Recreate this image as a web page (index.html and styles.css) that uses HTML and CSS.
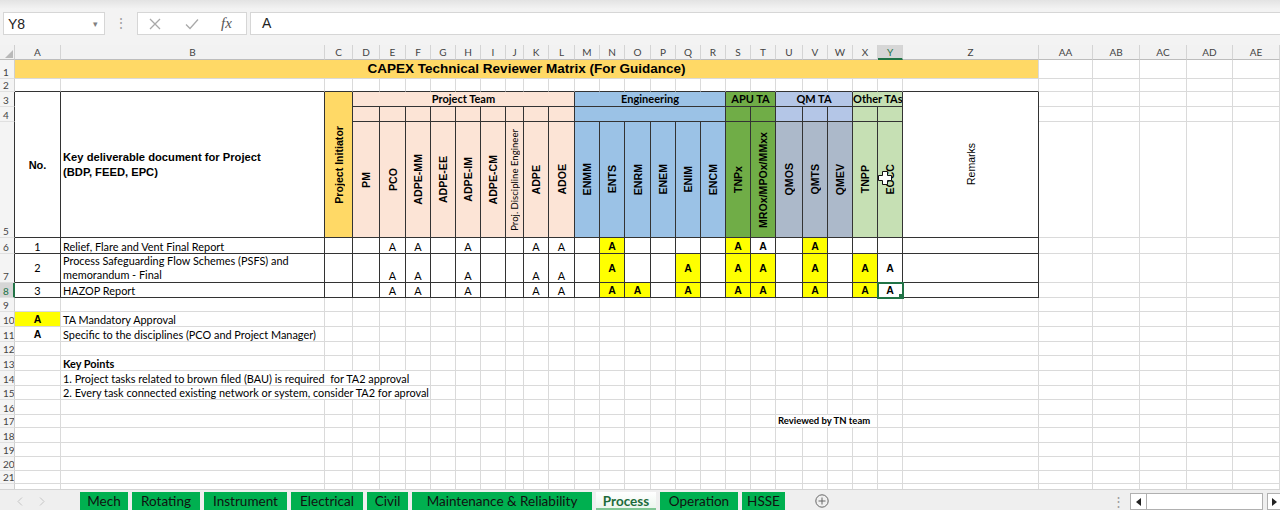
FILE: index.html
```html
<!DOCTYPE html>
<html>
<head>
<meta charset="utf-8">
<link rel="stylesheet" href="styles.css">
</head>
<body>
<div class="app">
  <div class="fbar">
    <div class="namebox"><span>Y8</span><span class="dd">&#9662;</span></div>
    <div class="dots">&#8942;</div>
    <div class="fxbox">
      <svg class="ic-x" width="12" height="12" viewBox="0 0 12 12"><path d="M1 1L11 11M11 1L1 11" stroke="#a9a9a9" stroke-width="1.3"/></svg>
      <svg class="ic-ok" width="14" height="12" viewBox="0 0 14 12"><path d="M1 6.5L5 10.5L13 1.5" stroke="#a9a9a9" stroke-width="1.3" fill="none"/></svg>
      <span class="fx">fx</span>
    </div>
    <div class="finput">A</div>
  </div>

  <div class="sheetwrap">
    <table class="sheet">
      <colgroup>
        <col class="w15"><col class="w46"><col class="w264"><col class="w28"><col class="w27"><col class="w26"><col class="w25"><col class="w25"><col class="w25"><col class="w25"><col class="w18"><col class="w25"><col class="w26"><col class="w25"><col class="w25"><col class="w26"><col class="w25"><col class="w25"><col class="w25"><col class="w25"><col class="w25"><col class="w27"><col class="w25"><col class="w25"><col class="w25"><col class="w25"><col class="w136"><col class="w54"><col class="w47"><col class="w47"><col class="w46"><col class="w47">
      </colgroup>
      <tr class="hdr">
        <th class="corner"><svg width="8" height="8" viewBox="0 0 8 8"><path d="M8 0V8H0Z" fill="#b9b9b9"/></svg></th>
        <th class="ch">A</th><th class="ch">B</th><th class="ch">C</th><th class="ch">D</th><th class="ch">E</th><th class="ch">F</th><th class="ch">G</th><th class="ch">H</th><th class="ch">I</th><th class="ch">J</th><th class="ch">K</th><th class="ch">L</th><th class="ch">M</th><th class="ch">N</th><th class="ch">O</th><th class="ch">P</th><th class="ch">Q</th><th class="ch">R</th><th class="ch">S</th><th class="ch">T</th><th class="ch">U</th><th class="ch">V</th><th class="ch">W</th><th class="ch">X</th><th class="ch chs">Y</th><th class="ch">Z</th><th class="ch">AA</th><th class="ch">AB</th><th class="ch">AC</th><th class="ch">AD</th><th class="ch">AE</th>
      </tr>
      <tr class="h19">
        <th class="rh">1</th>
        <td colspan="26" class="title">CAPEX Technical Reviewer Matrix (For Guidance)</td>
        <td></td><td></td><td></td><td></td><td></td>
      </tr>
      <tr class="h13 r2">
        <th class="rh">2</th>
        <td></td><td></td><td></td><td></td><td></td><td></td><td></td><td></td><td></td><td></td><td></td><td></td><td></td><td></td><td></td><td></td><td></td><td></td><td></td><td></td><td></td><td></td><td></td><td></td><td></td><td></td>
        <td class="x"></td><td class="x"></td><td class="x"></td><td class="x"></td><td class="x"></td>
      </tr>
      <tr class="h15 m">
        <th class="rh">3</th>
        <td rowspan="3" class="no">No.</td>
        <td rowspan="3" class="kd">Key deliverable document for Project<br>(BDP, FEED, EPC)</td>
        <td rowspan="3" class="gold vc"><span class="v">Project Initiator</span></td>
        <td colspan="9" class="peach gh">Project Team</td>
        <td colspan="6" class="blue gh">Engineering</td>
        <td colspan="2" class="green gh">APU TA</td>
        <td colspan="3" class="lav gh">QM TA</td>
        <td colspan="2" class="lgreen gh">Other TAs</td>
        <td rowspan="3" class="vc"><span class="v vr">Remarks</span></td>
        <td class="x"></td><td class="x"></td><td class="x"></td><td class="x"></td><td class="x"></td>
      </tr>
      <tr class="h15 m">
        <th class="rh">4</th>
        <td class="peach"></td><td class="peach"></td><td class="peach"></td><td class="peach"></td><td class="peach"></td><td class="peach"></td><td class="peach"></td><td class="peach"></td><td class="peach"></td>
        <td colspan="6" class="blue"></td>
        <td class="green"></td><td class="green"></td>
        <td class="lav"></td><td class="lav"></td><td class="lav"></td>
        <td class="lgreen"></td><td class="lgreen"></td>
        <td class="x"></td><td class="x"></td><td class="x"></td><td class="x"></td><td class="x"></td>
      </tr>
      <tr class="h116 m">
        <th class="rh">5</th>
        <td class="peach vc"><span class="v">PM</span></td>
        <td class="peach vc"><span class="v">PCO</span></td>
        <td class="peach vc"><span class="v">ADPE-MM</span></td>
        <td class="peach vc"><span class="v">ADPE-EE</span></td>
        <td class="peach vc"><span class="v">ADPE-IM</span></td>
        <td class="peach vc"><span class="v">ADPE-CM</span></td>
        <td class="peach vc"><span class="v vs">Proj. Discipline Engineer</span></td>
        <td class="peach vc"><span class="v">ADPE</span></td>
        <td class="peach vc"><span class="v">ADOE</span></td>
        <td class="blue vc"><span class="v">ENMM</span></td>
        <td class="blue vc"><span class="v">ENTS</span></td>
        <td class="blue vc"><span class="v">ENRM</span></td>
        <td class="blue vc"><span class="v">ENEM</span></td>
        <td class="blue vc"><span class="v">ENIM</span></td>
        <td class="blue vc"><span class="v">ENCM</span></td>
        <td class="green vc"><span class="v">TNPx</span></td>
        <td class="green vc"><span class="v">MROx/MPOx/MMxx</span></td>
        <td class="slate vc"><span class="v">QMOS</span></td>
        <td class="slate vc"><span class="v">QMTS</span></td>
        <td class="slate vc"><span class="v">QMEV</span></td>
        <td class="lgreen vc"><span class="v">TNPP</span></td>
        <td class="lgreen vc"><span class="v">EOCC</span></td>
        <td class="x"></td><td class="x"></td><td class="x"></td><td class="x"></td><td class="x"></td>
      </tr>
      <tr class="h16 m">
        <th class="rh">6</th>
        <td class="c">1</td>
        <td class="t">Relief, Flare and Vent Final Report</td>
        <td></td><td></td><td class="c">A</td><td class="c">A</td><td></td><td class="c">A</td><td></td><td></td><td class="c">A</td><td class="c">A</td>
        <td></td><td class="y">A</td><td></td><td></td><td></td><td></td>
        <td class="y">A</td><td class="ba">A</td>
        <td></td><td class="y">A</td><td></td>
        <td></td><td></td>
        <td></td>
        <td class="x"></td><td class="x"></td><td class="x"></td><td class="x"></td><td class="x"></td>
      </tr>
      <tr class="h29 m">
        <th class="rh">7</th>
        <td class="c mid">2</td>
        <td class="t two">Process Safeguarding Flow Schemes (PSFS) and<br>memorandum - Final</td>
        <td></td><td></td><td class="c">A</td><td class="c">A</td><td></td><td class="c">A</td><td></td><td></td><td class="c">A</td><td class="c">A</td>
        <td></td><td class="y">A</td><td></td><td></td><td class="y">A</td><td></td>
        <td class="y">A</td><td class="y">A</td>
        <td></td><td class="y">A</td><td></td>
        <td class="y">A</td><td class="ba">A</td>
        <td></td>
        <td class="x"></td><td class="x"></td><td class="x"></td><td class="x"></td><td class="x"></td>
      </tr>
      <tr class="h15 m">
        <th class="rh rhs">8</th>
        <td class="c">3</td>
        <td class="t">HAZOP Report</td>
        <td></td><td></td><td class="c">A</td><td class="c">A</td><td></td><td class="c">A</td><td></td><td></td><td class="c">A</td><td class="c">A</td>
        <td></td><td class="y">A</td><td class="y">A</td><td></td><td class="y">A</td><td></td>
        <td class="y">A</td><td class="y">A</td>
        <td></td><td class="y">A</td><td></td>
        <td class="y">A</td><td class="ba sel">A</td>
        <td></td>
        <td class="x"></td><td class="x"></td><td class="x"></td><td class="x"></td><td class="x"></td>
      </tr>
      <tr class="h14">
        <th class="rh">9</th>
        <td></td><td></td><td></td><td></td><td></td><td></td><td></td><td></td><td></td><td></td><td></td><td></td><td></td><td></td><td></td><td></td><td></td><td></td><td></td><td></td><td></td><td></td><td></td><td></td><td></td><td></td><td></td><td></td><td></td><td></td><td></td>
      </tr>
      <tr class="h15">
        <th class="rh">10</th>
        <td class="ya">A</td><td class="t">TA Mandatory Approval</td>
        <td></td><td></td><td></td><td></td><td></td><td></td><td></td><td></td><td></td><td></td><td></td><td></td><td></td><td></td><td></td><td></td><td></td><td></td><td></td><td></td><td></td><td></td><td></td><td></td><td></td><td></td><td></td><td></td><td></td>
      </tr>
      <tr class="h15">
        <th class="rh">11</th>
        <td class="ab">A</td><td class="t">Specific to the disciplines (PCO and Project Manager)</td>
        <td></td><td></td><td></td><td></td><td></td><td></td><td></td><td></td><td></td><td></td><td></td><td></td><td></td><td></td><td></td><td></td><td></td><td></td><td></td><td></td><td></td><td></td><td></td><td></td><td></td><td></td><td></td><td></td><td></td>
      </tr>
      <tr class="h14">
        <th class="rh">12</th>
        <td></td><td></td><td></td><td></td><td></td><td></td><td></td><td></td><td></td><td></td><td></td><td></td><td></td><td></td><td></td><td></td><td></td><td></td><td></td><td></td><td></td><td></td><td></td><td></td><td></td><td></td><td></td><td></td><td></td><td></td><td></td>
      </tr>
      <tr class="h15">
        <th class="rh">13</th>
        <td></td><td class="t b">Key Points</td>
        <td></td><td></td><td></td><td></td><td></td><td></td><td></td><td></td><td></td><td></td><td></td><td></td><td></td><td></td><td></td><td></td><td></td><td></td><td></td><td></td><td></td><td></td><td></td><td></td><td></td><td></td><td></td><td></td><td></td>
      </tr>
      <tr class="h15">
        <th class="rh">14</th>
        <td></td><td class="t ov" colspan="5">1. Project tasks related to brown filed (BAU) is required&nbsp; for TA2 approval</td>
        <td></td><td></td><td></td><td></td><td></td><td></td><td></td><td></td><td></td><td></td><td></td><td></td><td></td><td></td><td></td><td></td><td></td><td></td><td></td><td></td><td></td><td></td><td></td><td></td><td></td>
      </tr>
      <tr class="h14">
        <th class="rh">15</th>
        <td></td><td class="t ov" colspan="5">2. Every task connected existing network or system, consider TA2 for aproval</td>
        <td></td><td></td><td></td><td></td><td></td><td></td><td></td><td></td><td></td><td></td><td></td><td></td><td></td><td></td><td></td><td></td><td></td><td></td><td></td><td></td><td></td><td></td><td></td><td></td><td></td>
      </tr>
      <tr class="h15">
        <th class="rh">16</th>
        <td></td><td></td><td></td><td></td><td></td><td></td><td></td><td></td><td></td><td></td><td></td><td></td><td></td><td></td><td></td><td></td><td></td><td></td><td></td><td></td><td></td><td></td><td></td><td></td><td></td><td></td><td></td><td></td><td></td><td></td><td></td>
      </tr>
      <tr class="h13">
        <th class="rh">17</th>
        <td></td><td></td><td></td><td></td><td></td><td></td><td></td><td></td><td></td><td></td><td></td><td></td><td></td><td></td><td></td><td></td><td></td><td></td><td></td><td></td>
        <td colspan="4" class="t rv">Reviewed by TN team</td>
        <td></td><td></td><td></td><td></td><td></td><td></td><td></td>
      </tr>
      <tr class="h15">
        <th class="rh">18</th>
        <td></td><td></td><td></td><td></td><td></td><td></td><td></td><td></td><td></td><td></td><td></td><td></td><td></td><td></td><td></td><td></td><td></td><td></td><td></td><td></td><td></td><td></td><td></td><td></td><td></td><td></td><td></td><td></td><td></td><td></td><td></td>
      </tr>
      <tr class="h14">
        <th class="rh">19</th>
        <td></td><td></td><td></td><td></td><td></td><td></td><td></td><td></td><td></td><td></td><td></td><td></td><td></td><td></td><td></td><td></td><td></td><td></td><td></td><td></td><td></td><td></td><td></td><td></td><td></td><td></td><td></td><td></td><td></td><td></td><td></td>
      </tr>
      <tr class="h14">
        <th class="rh">20</th>
        <td></td><td></td><td></td><td></td><td></td><td></td><td></td><td></td><td></td><td></td><td></td><td></td><td></td><td></td><td></td><td></td><td></td><td></td><td></td><td></td><td></td><td></td><td></td><td></td><td></td><td></td><td></td><td></td><td></td><td></td><td></td>
      </tr>
      <tr class="h13">
        <th class="rh">21</th>
        <td></td><td></td><td></td><td></td><td></td><td></td><td></td><td></td><td></td><td></td><td></td><td></td><td></td><td></td><td></td><td></td><td></td><td></td><td></td><td></td><td></td><td></td><td></td><td></td><td></td><td></td><td></td><td></td><td></td><td></td><td></td>
      </tr>
      <tr class="h15">
        <th class="rh">22</th>
        <td></td><td></td><td></td><td></td><td></td><td></td><td></td><td></td><td></td><td></td><td></td><td></td><td></td><td></td><td></td><td></td><td></td><td></td><td></td><td></td><td></td><td></td><td></td><td></td><td></td><td></td><td></td><td></td><td></td><td></td><td></td>
      </tr>
    </table>
  </div>

  <div class="tabbar">
    <div class="nav">
      <svg width="6" height="9" viewBox="0 0 6 9"><path d="M5 0.5L1 4.5L5 8.5" stroke="#c4c4c4" fill="none"/></svg>
      <svg width="6" height="9" viewBox="0 0 6 9"><path d="M1 0.5L5 4.5L1 8.5" stroke="#c4c4c4" fill="none"/></svg>
    </div>
    <div class="tab tw1">Mech</div>
    <div class="tab tw2">Rotating</div>
    <div class="tab tw3">Instrument</div>
    <div class="tab tw4">Electrical</div>
    <div class="tab tw5">Civil</div>
    <div class="tab tw6">Maintenance &amp; Reliability</div>
    <div class="tab tw7 active">Process</div>
    <div class="tab tw8">Operation</div>
    <div class="tab tw9">HSSE</div>
    <svg class="addsheet" width="14" height="14" viewBox="0 0 14 14"><circle cx="7" cy="7" r="6.2" fill="none" stroke="#666" stroke-width="1"/><path d="M7 3.5V10.5M3.5 7H10.5" stroke="#666" stroke-width="1"/></svg>
    <div class="hscroll">
      <span class="hdots">&#8942;</span>
      <div class="sbtn sleft"><svg width="5" height="8" viewBox="0 0 5 8"><path d="M5 0V8L0 4Z" fill="#222"/></svg></div>
      <div class="strack"></div>
      <div class="sbtn sright"><svg width="5" height="8" viewBox="0 0 5 8"><path d="M0 0V8L5 4Z" fill="#222"/></svg></div>
    </div>
  </div>

  <svg class="cursor" width="14" height="14" viewBox="0 0 14 14"><path d="M4.5 0.5H9.5V4.5H13.5V9.5H9.5V13.5H4.5V9.5H0.5V4.5H4.5Z" fill="#fff" stroke="#111" stroke-width="1"/></svg>
</div>
</body>
</html>
```

FILE: styles.css
```css
html, body { margin: 0; padding: 0; }
body { width: 1280px; height: 510px; overflow: hidden; background: #fff; font-family: Lato, "Liberation Sans", sans-serif; }
.app { position: relative; width: 1280px; height: 510px; overflow: hidden; }

/* formula bar */
.fbar { height: 45px; box-sizing: border-box; padding-top: 12px; display: flex; align-items: flex-start; background: linear-gradient(#e3e3e3, #f3f3f3 9px, #f3f3f3); }
.namebox { margin-left: 3px; width: 102px; height: 23px; box-sizing: border-box; background: #fff; border: 1px solid #d6d6d6; display: flex; align-items: center; justify-content: space-between; padding: 0 6px 0 4px; font: 14px "Liberation Sans", sans-serif; color: #222; }
.namebox .dd { font-size: 9px; color: #808080; }
.dots { width: 32px; text-align: center; color: #a0a0a0; font: 14px/23px "Liberation Sans", sans-serif; }
.fxbox { width: 110px; height: 23px; box-sizing: border-box; background: #fff; border: 1px solid #d6d6d6; display: flex; align-items: center; }
.ic-x { margin-left: 11px; }
.ic-ok { margin-left: 24px; }
.fx { margin-left: 22px; font: italic 15px "Liberation Serif", serif; color: #555; }
.finput { margin-left: 3px; flex: 1; height: 23px; box-sizing: border-box; background: #fff; border: 1px solid #d6d6d6; border-right: none; font: 14px/21px "Liberation Sans", sans-serif; padding-left: 11px; color: #222; }

/* sheet */
.sheetwrap { height: 444px; overflow: hidden; }
.sheet { border-collapse: separate; border-spacing: 0; table-layout: fixed; width: 1280px; }
.w15 { width: 15px; } .w18 { width: 18px; } .w25 { width: 25px; } .w26 { width: 26px; } .w27 { width: 27px; } .w28 { width: 28px; }
.w46 { width: 46px; } .w47 { width: 47px; } .w54 { width: 54px; } .w136 { width: 136px; } .w264 { width: 264px; }

.sheet td, .sheet th { padding: 0; border-right: 1px solid #dadada; border-bottom: 1px solid #dadada; overflow: hidden; white-space: nowrap; font: 10.9px/12px Lato, sans-serif; color: #000; vertical-align: bottom; text-align: left; }

.hdr { height: 15px; }
.h13 { height: 13px; } .h14 { height: 14px; } .h15 { height: 15px; } .h16 { height: 16px; } .h19 { height: 19px; } .h29 { height: 29px; } .h116 { height: 116px; }

.sheet th.corner { background: #f2f2f2; text-align: right; vertical-align: bottom; border-right-color: #cfcfcf; border-bottom-color: #bdbdbd; line-height: 0; padding: 0 1px 1px 0; }
.sheet th.ch { background: #f2f2f2; text-align: center; vertical-align: middle; font: 10px/12px Lato, sans-serif; color: #444; border-right-color: #d4d4d4; border-bottom-color: #bdbdbd; }
.sheet th.chs { background: #d6d6d6; color: #217346; border-bottom: 2px solid #217346; }
.sheet th.rh { background: #f4f4f4; font: 10px/11px Lato, sans-serif; color: #444; padding-left: 3px; vertical-align: bottom; border-right-color: #cfcfcf; border-bottom-color: #e0e0e0; }
.sheet th.rhs { background: #d6d6d6; color: #217346; border-right: 2px solid #217346; }

/* matrix borders */
.r2 > td:not(.x) { border-bottom-color: #333; }
.m > td:not(.x) { border-right-color: #333; border-bottom-color: #333; }
.m > th.rh { border-right-color: #333; }
.m > th.rhs { border-right: 2px solid #217346; }

/* content styles */
.title { background: #ffd966; text-align: center !important; vertical-align: middle !important; font: bold 13.5px/16px "Liberation Sans", sans-serif !important; }
.no { text-align: center !important; vertical-align: middle !important; font: bold 11px/14px "Liberation Sans", sans-serif !important; }
.kd { vertical-align: middle !important; padding-left: 2px !important; font: bold 11.2px/15px "Liberation Sans", sans-serif !important; }
.gh { text-align: center !important; vertical-align: middle !important; font: bold 11px/12px Lato, sans-serif !important; }
.vc { text-align: center !important; vertical-align: middle !important; line-height: 10px !important; }
.v { display: inline-block; vertical-align: middle; writing-mode: vertical-rl; transform: rotate(180deg); white-space: nowrap; font: bold 10.6px/12px "Liberation Sans", sans-serif; }
.vs { font: 9.6px/12px Lato, sans-serif; }
.vr { font: 10.5px/12px "Liberation Sans", sans-serif; }

.gold { background: #ffd966; }
.peach { background: #fce4d6; }
.blue { background: #9bc2e6; }
.green { background: #70ad47; }
.lav { background: #b4c6e7; }
.slate { background: #acb9ca; }
.lgreen { background: #c6e0b4; }

.c { text-align: center !important; }
.mid { vertical-align: middle !important; }
.t { padding-left: 2px !important; }
.ov { overflow: visible !important; }
.two { line-height: 14px !important; }
.b { font-weight: bold !important; }
.y { background: #ffff00; text-align: center !important; vertical-align: middle !important; font: bold 10.5px/12px "Liberation Sans", sans-serif !important; }
.ba { text-align: center !important; vertical-align: middle !important; font: bold 10.5px/12px "Liberation Sans", sans-serif !important; }
.ya { background: #ffff00; text-align: center !important; vertical-align: middle !important; font: bold 10.5px/12px "Liberation Sans", sans-serif !important; }
.ab { text-align: center !important; vertical-align: middle !important; font: bold 10.5px/12px "Liberation Sans", sans-serif !important; }
.rv { font: bold 9.5px/12px Lato, sans-serif !important; vertical-align: middle !important; }

.sel { position: relative; outline: 2px solid #217346; outline-offset: -1px; }
.sel::after { content: ""; position: absolute; right: -3px; bottom: -3px; width: 5px; height: 5px; background: #217346; border: 1px solid #fff; }

/* tab bar */
.tabbar { height: 21px; box-sizing: border-box; border-top: 1px solid #d4d4d4; background: #efefef; display: flex; align-items: flex-end; }
.nav { width: 80px; height: 18px; display: flex; align-items: center; padding-left: 17px; box-sizing: border-box; gap: 16px; }
.tab { height: 18px; margin-right: 4px; background: #00b050; color: #111; font: 13.5px/18px Lato, sans-serif; text-align: center; white-space: nowrap; overflow: hidden; }
.tw1 { width: 48px; } .tw2 { width: 68px; } .tw3 { width: 83px; } .tw4 { width: 72px; } .tw5 { width: 41px; }
.tw6 { width: 180px; } .tw7 { width: 60px; } .tw8 { width: 78px; } .tw9 { width: 43px; }
.tab.active { background: linear-gradient(#ffffff, #eaf5ec); color: #1d6b3a; font-weight: bold; box-shadow: inset 0 -2px 0 #7fc693; }
.addsheet { margin-left: 26px; margin-bottom: 2px; }
.hscroll { margin-left: auto; display: flex; align-items: flex-end; height: 17px; }
.hdots { width: 10px; margin-right: 8px; color: #9a9a9a; font: 13px/17px "Liberation Sans", sans-serif; text-align: center; }
.sbtn { width: 17px; height: 17px; box-sizing: border-box; border: 1px solid #b0b0b0; background: #fff; display: flex; align-items: center; justify-content: center; }
.sright { width: 13px; margin-left: 4px; border-right: none; }
.strack { width: 116px; height: 17px; box-sizing: border-box; border: 1px solid #b0b0b0; border-left: none; background: #fff; }

.cursor { position: absolute; left: 878px; top: 171px; }
```
